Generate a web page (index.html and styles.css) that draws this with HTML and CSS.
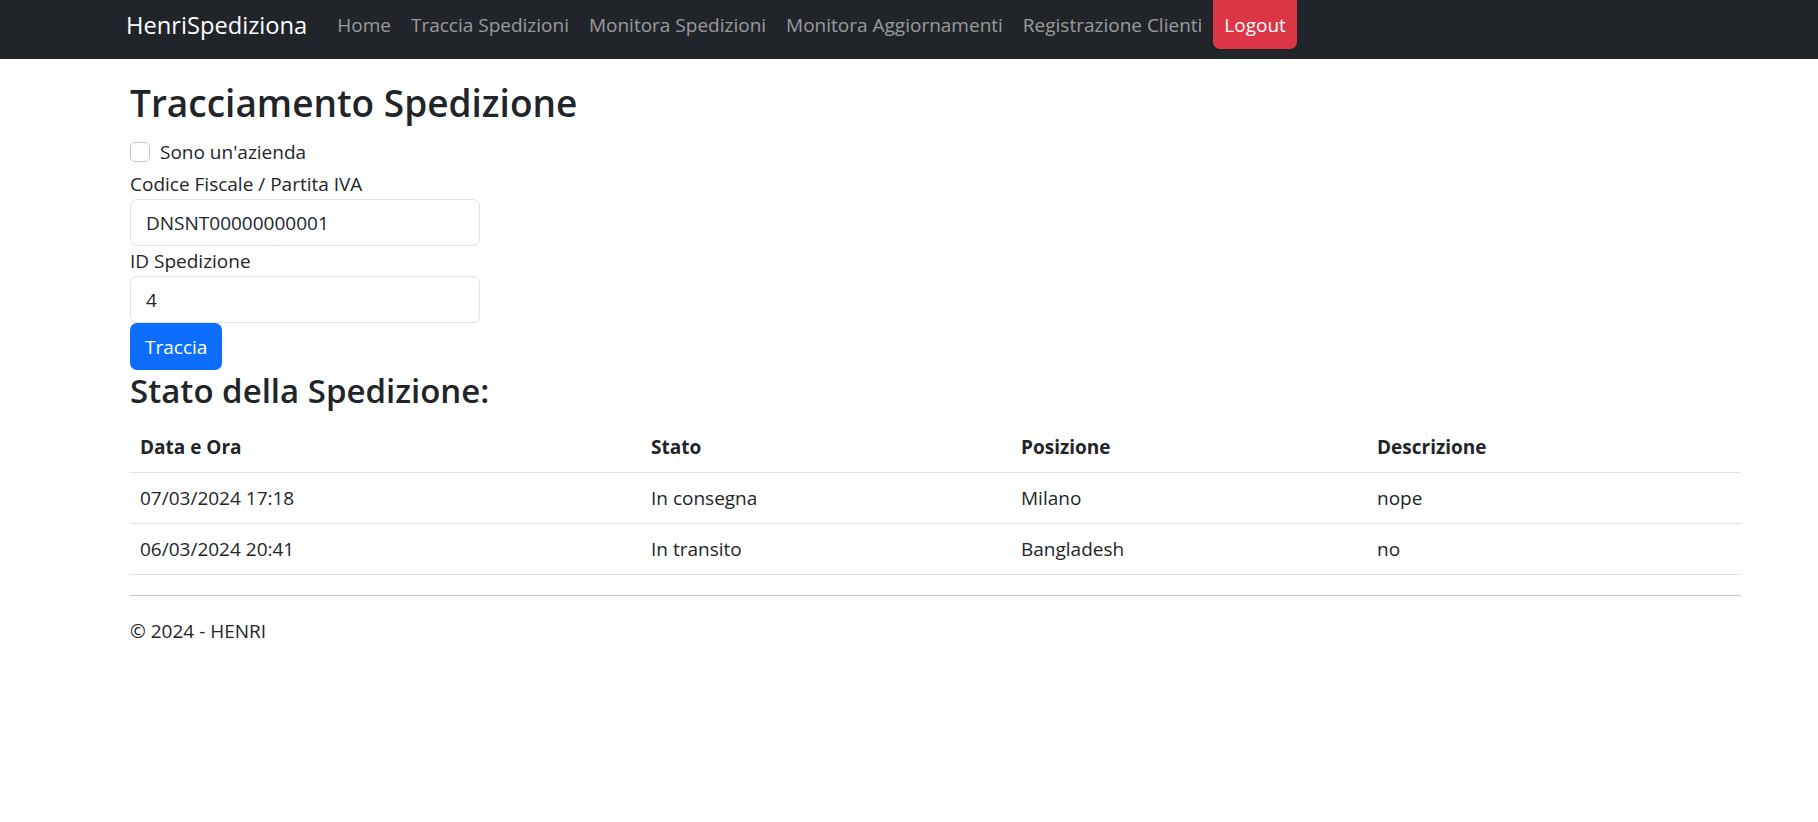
FILE: index.html
```html
<!DOCTYPE html>
<html lang="it">
<head>
<meta charset="utf-8">
<title>Tracciamento Spedizione - HenriSpediziona</title>
<link rel="stylesheet" href="styles.css">
</head>
<body>
<header class="navbar">
  <a class="brand" href="#">HenriSpediziona</a>
  <nav class="nav">
    <a class="nav-link" href="#">Home</a>
    <a class="nav-link" href="#">Traccia Spedizioni</a>
    <a class="nav-link" href="#">Monitora Spedizioni</a>
    <a class="nav-link" href="#">Monitora Aggiornamenti</a>
    <a class="nav-link" href="#">Registrazione Clienti</a>
    <button class="btn-logout" type="button">Logout</button>
  </nav>
</header>
<main class="container">
  <h1 class="title">Tracciamento Spedizione</h1>
  <form class="track-form">
    <label class="form-check">
      <input class="check-input" type="checkbox">
      <span>Sono un'azienda</span>
    </label>
    <label class="form-label" for="cf">Codice Fiscale / Partita IVA</label>
    <input class="form-control" id="cf" type="text" value="DNSNT00000000001">
    <label class="form-label" for="ids">ID Spedizione</label>
    <input class="form-control" id="ids" type="text" value="4">
    <div><button class="btn-primary" type="button">Traccia</button></div>
  </form>
  <h3 class="subtitle">Stato della Spedizione:</h3>
  <table class="table">
    <thead>
      <tr><th class="c1">Data e Ora</th><th class="c2">Stato</th><th class="c3">Posizione</th><th>Descrizione</th></tr>
    </thead>
    <tbody>
      <tr><td>07/03/2024 17:18</td><td>In consegna</td><td>Milano</td><td>nope</td></tr>
      <tr><td>06/03/2024 20:41</td><td>In transito</td><td>Bangladesh</td><td>no</td></tr>
    </tbody>
  </table>
  <hr class="divider">
  <footer class="footer">© 2024 - HENRI</footer>
</main>
</body>
</html>
```

FILE: styles.css
```css
* { box-sizing: border-box; }
html, body { margin: 0; padding: 0; }
body {
  font-family: "Open Sans", "Noto Sans", "DejaVu Sans", sans-serif;
  font-size: 19px;
  line-height: 30px;
  color: #212529;
  background: #fff;
}
a { text-decoration: none; }

.navbar {
  height: 59px;
  background: #212529;
  display: flex;
  align-items: flex-start;
  padding-left: 126px;
}
.brand {
  color: #fff;
  font-size: 23.7px;
  line-height: 30px;
  padding: 10px 0;
  margin-right: 20px;
}
.nav { display: flex; align-items: flex-start; }
.nav-link {
  color: rgba(255, 255, 255, 0.55);
  font-size: 19px;
  line-height: 30px;
  padding: 10px 10px;
}
.btn-logout {
  font-family: inherit;
  font-size: 19px;
  line-height: 30px;
  color: #fff;
  background: #dc3545;
  border: 0;
  height: 49px;
  padding: 0 11px;
  margin-left: 1px;
  border-radius: 0 0 7px 7px;
}

.container {
  width: 1741px;
  padding-left: 130px;
  margin-top: 20px;
}
.title {
  font-size: 37px;
  font-weight: 600;
  line-height: 48px;
  margin: 0 0 10px;
}
.track-form { display: flex; flex-direction: column; align-items: flex-start; }
.form-check {
  display: flex;
  align-items: center;
  height: 30px;
  margin-bottom: 2px;
}
.check-input {
  appearance: none;
  width: 20px;
  height: 20px;
  margin: 0 10px 0 0;
  border: 1px solid #c4c6c8;
  border-radius: 5px;
  background: #fff;
}
.form-label { display: block; }
.form-control {
  font-family: inherit;
  font-size: 19px;
  color: #212529;
  width: 350px;
  height: 47px;
  padding: 0 15px;
  border: 1px solid #dee2e6;
  border-radius: 7px;
  background: #fff;
}
.btn-primary {
  font-family: inherit;
  font-size: 19px;
  line-height: 30px;
  color: #fff;
  background: #0d6efd;
  border: 0;
  height: 47px;
  padding: 0 15px;
  border-radius: 7px;
}
.subtitle {
  font-size: 33px;
  font-weight: 600;
  line-height: 42px;
  margin: 0 0 10px;
}
.table {
  width: 1611px;
  border-collapse: collapse;
  margin: 0;
}
.table th, .table td {
  text-align: left;
  padding: 10px 10px;
  border-bottom: 1px solid #dee2e6;
  line-height: 30px;
}
.table th { font-weight: 700; }
.c1 { width: 511px; }
.c2 { width: 370px; }
.c3 { width: 356px; }
.divider {
  width: 1611px;
  margin: 20px 0;
  border: 0;
  border-top: 1px solid #c8c9ca;
}
.footer { line-height: 30px; }
```
